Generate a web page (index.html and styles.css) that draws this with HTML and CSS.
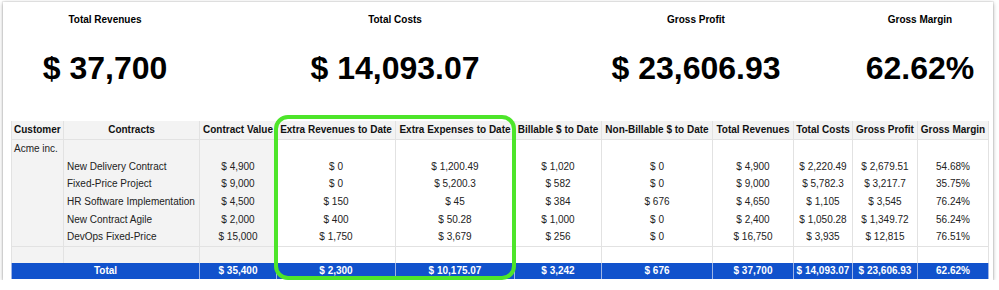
FILE: index.html
```html
<!DOCTYPE html>
<html>
<head>
<meta charset="utf-8">
<link rel="stylesheet" href="styles.css">
</head>
<body>
<div class="card">
  <div class="kpis">
    <div class="kpi kpi-revenues"><div class="kpi-label">Total Revenues</div><div class="kpi-value">$ 37,700</div></div>
    <div class="kpi kpi-costs"><div class="kpi-label">Total Costs</div><div class="kpi-value">$ 14,093.07</div></div>
    <div class="kpi kpi-profit"><div class="kpi-label">Gross Profit</div><div class="kpi-value">$ 23,606.93</div></div>
    <div class="kpi kpi-margin"><div class="kpi-label">Gross Margin</div><div class="kpi-value">62.62%</div></div>
  </div>
  <div class="table-wrap">
    <table class="grid">
      <colgroup>
        <col class="w52"><col class="w136"><col class="w77"><col class="w119"><col class="w119"><col class="w87"><col class="w111"><col class="w81"><col class="w59"><col class="w65"><col class="w71">
      </colgroup>
      <thead>
        <tr>
          <th class="left">Customer</th><th>Contracts</th><th>Contract Value</th><th>Extra Revenues to Date</th><th>Extra Expenses to Date</th><th>Billable $ to Date</th><th>Non-Billable $ to Date</th><th>Total Revenues</th><th>Total Costs</th><th>Gross Profit</th><th>Gross Margin</th>
        </tr>
      </thead>
      <tbody>
        <tr class="cust-row"><td class="cust">Acme inc.</td><td class="grey"></td><td class="grey"></td><td></td><td></td><td></td><td></td><td></td><td></td><td></td><td></td></tr>
        <tr><td class="cust"></td><td class="grey name">New Delivery Contract</td><td class="grey">$ 4,900</td><td>$ 0</td><td>$ 1,200.49</td><td>$ 1,020</td><td>$ 0</td><td>$ 4,900</td><td>$ 2,220.49</td><td>$ 2,679.51</td><td>54.68%</td></tr>
        <tr><td class="cust"></td><td class="grey name">Fixed-Price Project</td><td class="grey">$ 9,000</td><td>$ 0</td><td>$ 5,200.3</td><td>$ 582</td><td>$ 0</td><td>$ 9,000</td><td>$ 5,782.3</td><td>$ 3,217.7</td><td>35.75%</td></tr>
        <tr><td class="cust"></td><td class="grey name">HR Software Implementation</td><td class="grey">$ 4,500</td><td>$ 150</td><td>$ 45</td><td>$ 384</td><td>$ 676</td><td>$ 4,650</td><td>$ 1,105</td><td>$ 3,545</td><td>76.24%</td></tr>
        <tr><td class="cust"></td><td class="grey name">New Contract Agile</td><td class="grey">$ 2,000</td><td>$ 400</td><td>$ 50.28</td><td>$ 1,000</td><td>$ 0</td><td>$ 2,400</td><td>$ 1,050.28</td><td>$ 1,349.72</td><td>56.24%</td></tr>
        <tr class="last-row"><td class="cust"></td><td class="grey name">DevOps Fixed-Price</td><td class="grey">$ 15,000</td><td>$ 1,750</td><td>$ 3,679</td><td>$ 256</td><td>$ 0</td><td>$ 16,750</td><td>$ 3,935</td><td>$ 12,815</td><td>76.51%</td></tr>
        <tr class="empty-row"><td class="cust"></td><td class="grey"></td><td class="grey"></td><td></td><td></td><td></td><td></td><td></td><td></td><td></td><td></td></tr>
      </tbody>
      <tfoot>
        <tr class="total-row"><td colspan="2">Total</td><td>$ 35,400</td><td>$ 2,300</td><td>$ 10,175.07</td><td>$ 3,242</td><td>$ 676</td><td>$ 37,700</td><td>$ 14,093.07</td><td>$ 23,606.93</td><td>62.62%</td></tr>
      </tfoot>
    </table>
    <div class="highlight"></div>
  </div>
</div>
</body>
</html>
```

FILE: styles.css
```css
html, body {
  margin: 0;
  padding: 0;
  background: #ffffff;
  font-family: "Liberation Sans", Arial, sans-serif;
}

.card {
  margin: 2px 6px 0 3px;
  width: 990px;
  height: 278px;
  box-sizing: border-box;
  padding-top: 12px;
  background: #ffffff;
  box-shadow: 0 1px 4px rgba(0, 0, 0, 0.35), 0 0 0 1px rgba(0, 0, 0, 0.05);
}

.kpis {
  display: flex;
}

.kpi {
  flex: none;
  text-align: center;
  color: #000;
}

.kpi-revenues { width: 188px; margin-left: 8px; }
.kpi-costs { width: 200px; margin-left: 96px; }
.kpi-profit { width: 200px; margin-left: 101px; }
.kpi-margin { width: 140px; margin-left: 54px; }

.kpi-label {
  font-size: 10px;
  font-weight: bold;
  line-height: 12px;
}

.kpi-value {
  margin-top: 24px;
  font-size: 32px;
  font-weight: bold;
  line-height: 36px;
}

.table-wrap {
  position: relative;
  margin-top: 35px;
  margin-left: 8px;
  width: 977px;
}

.grid {
  border-collapse: collapse;
  table-layout: fixed;
  width: 977px;
  font-size: 10px;
  color: #222;
}

.w52 { width: 52px; }
.w136 { width: 136px; }
.w77 { width: 77px; }
.w119 { width: 119px; }
.w87 { width: 87px; }
.w111 { width: 111px; }
.w81 { width: 81px; }
.w59 { width: 59px; }
.w65 { width: 65px; }
.w71 { width: 71px; }

.grid th,
.grid td {
  padding: 0 2px;
  white-space: nowrap;
  overflow: hidden;
  text-align: center;
  border-left: 1px solid #e2e2e2;
  border-right: 1px solid #e2e2e2;
  line-height: 12px;
}

.grid th {
  height: 18px;
  background: #f3f3f3;
  color: #111;
  font-weight: bold;
  border-bottom: 1px solid #e2e2e2;
}

.grid th.left {
  text-align: left;
}

.grid tbody td {
  height: 17.6px;
}

.grid td.cust {
  background: #f3f3f3;
  text-align: left;
  color: #222;
}

.grid td.grey {
  background: #f3f3f3;
}

.grid td.name {
  text-align: left;
  padding-left: 3px;
}

.grid tr.cust-row td {
  height: 18px;
}

.grid tr.last-row td {
  border-bottom: 1px solid #e2e2e2;
}

.grid tr.empty-row td {
  height: 16px;
}

.grid tr.total-row td {
  height: 16px;
  background: #1152cc;
  color: #ffffff;
  font-weight: bold;
  border-left: 1px solid #9db4e6;
  border-right: 1px solid #9db4e6;
}

.highlight {
  position: absolute;
  left: 263px;
  top: -6px;
  width: 242px;
  height: 165px;
  box-sizing: border-box;
  border: 4px solid #4de52a;
  border-radius: 14px;
  pointer-events: none;
}
```
